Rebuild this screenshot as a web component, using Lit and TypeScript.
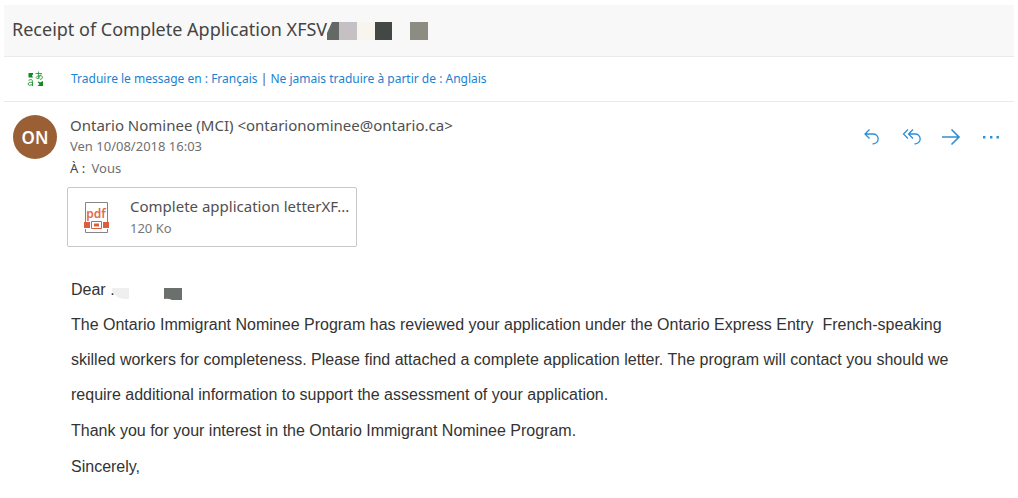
import { LitElement, html, css, svg } from "lit";
import { customElement, property } from "lit/decorators.js";

const redactedSubject = svg`
  <path d="M5 0H12V18H0V11Z" fill="#656965" />
  <path d="M12 0H30V18H12Z" fill="#c4c0c4" />
  <path d="M30 0H48V18H30Z" fill="#f8f4ee" />
  <path d="M48 0H65V18H48Z" fill="#444844" />
  <path d="M83 0H101V18H83Z" fill="#8c8c82" />`;

const redactedName = svg`
  <path d="M0 0H17V11H12Q4 10 0 3Z" fill="#efefef" />
  <path d="M52 0H70V12H60Q56 10 52 11Z" fill="#6c706c" />`;

@customElement("mail-action")
class MailAction extends LitElement {
  @property() label = "";
  @property() kind = "reply";

  static styles = css`
    :host {
      display: block;
    }
    .action {
      display: block;
      width: 20px;
      height: 20px;
      padding: 0;
      border: 0;
      background: none;
      color: #2b8fd6;
      cursor: pointer;
    }
    .glyph {
      display: block;
      fill: none;
      stroke: currentColor;
      stroke-width: 1.3;
    }
    .dots {
      fill: currentColor;
      stroke: none;
    }
  `;

  private glyph() {
    switch (this.kind) {
      case "reply":
        return svg`<path d="M8.500 2.500L4 7L8.500 11.500M4 7H12A4.800 4.800 0 0 1 12.500 16.800H11.500" />`;
      case "reply-all":
        return svg`<path d="M7 2.500L2.500 7L7 11.500M12 2.500L7.500 7L12 11.500M7.500 7H14A4.800 4.800 0 0 1 14.500 16.800H13.500" />`;
      case "forward":
        return svg`<path d="M1 10H18M10.500 2.500L18 10L10.500 17.500" stroke-width="1.600" />`;
      default:
        return svg`<path class="dots" d="M2 9h2.400v2.400H2zM9 9h2.400v2.400H9zM15.500 9h2.400v2.400H15.500z" />`;
    }
  }

  render() {
    return html`<button class="action" type="button" aria-label=${this.label}>
      <svg class="glyph" width="20" height="20" viewBox="0 0 20 20" aria-hidden="true">${this.glyph()}</svg>
    </button>`;
  }
}

@customElement("app-root")
class AppRoot extends LitElement {
  static styles = css`
    :host {
      display: block;
      padding: 5px 4px 0;
      background: #fff;
      color: #505050;
      font-family: "Noto Sans", "Open Sans", sans-serif;
    }
    .subject {
      display: flex;
      align-items: center;
      height: 51px;
      padding: 0 8px;
      background: #f8f8f8;
      border-bottom: 1px solid #eaeaea;
    }
    .title {
      margin: 0;
      padding-bottom: 3px;
      color: #444;
      font-size: 18px;
      line-height: 24px;
      font-weight: 400;
      white-space: nowrap;
    }
    .mask {
      display: block;
      flex: none;
    }
    .translate {
      display: grid;
      grid-template-columns: 67px 1fr;
      align-items: center;
      height: 44px;
      border-bottom: 1px solid #eaeaea;
      font-size: 12px;
      line-height: 16px;
    }
    .translate-icon {
      display: block;
      margin-left: 23px;
    }
    .link {
      color: #1a82cf;
      text-decoration: none;
    }
    .header {
      display: grid;
      grid-template-columns: 44px 1fr auto;
      column-gap: 13px;
      padding: 13px 13px 0 9px;
    }
    .avatar {
      display: grid;
      place-items: center;
      width: 44px;
      height: 44px;
      border-radius: 50%;
      background: #9a5f35;
      color: #fff;
      font-size: 17px;
      font-weight: 600;
    }
    .sender {
      font-size: 15px;
      line-height: 20px;
    }
    .meta {
      font-size: 13px;
      line-height: 22px;
      color: #707070;
    }
    .to {
      color: #444;
      padding-right: 3px;
    }
    .actions {
      display: flex;
      gap: 20px;
      padding-top: 12px;
    }
    .content {
      padding: 8px 40px 0 63px;
    }
    .attachment {
      display: flex;
      align-items: center;
      gap: 20px;
      box-sizing: border-box;
      width: 290px;
      max-width: 100%;
      height: 60px;
      padding: 0 4px 0 15px;
      border: 1px solid #c8c8c8;
      border-radius: 2px;
      color: #505050;
      text-decoration: none;
    }
    .file {
      min-width: 0;
    }
    .name {
      display: block;
      overflow: hidden;
      text-overflow: ellipsis;
      white-space: nowrap;
      font-size: 15px;
      line-height: 22px;
    }
    .size {
      display: block;
      font-size: 13px;
      line-height: 22px;
      color: #777;
    }
    .body {
      padding: 25px 0 0 4px;
      color: #333;
      font-family: "Liberation Sans", Arial, sans-serif;
      font-size: 16px;
      line-height: 35px;
    }
    .line {
      margin: 0 0 1px;
      white-space: pre-wrap;
    }
    .greeting {
      display: flex;
      align-items: center;
      margin: 0;
    }
    .greeting .mask {
      margin: 9px 0 0 -3px;
    }
  `;

  render() {
    return html`
      <header class="subject">
        <h1 class="title">Receipt of Complete Application XFSV</h1>
        <svg class="mask" width="101" height="18" aria-hidden="true">${redactedSubject}</svg>
      </header>
      <div class="translate">
        <svg class="translate-icon" width="18" height="16" viewBox="0 0 18 16" fill="none" stroke="#2f9a3a" aria-hidden="true">
          <path d="M1.500 2H6V3.500L5 4.500L6 6.500H1.500ZM10.500 11L12 10.500L13 11.500L16 10V15H10.500L12.500 13Z" fill="#128a20" stroke="none" />
          <path d="M1.500 9.300Q5.500 7.500 5.500 10.500V15M5.500 11.300Q1 11 1 13.300Q1.300 15.300 5.500 13.500" />
          <path d="M8.500 2.500H15M11.500 .500Q11 5 12 8M14 3.500Q12 7.700 10 7.700Q8 6.500 10.500 5Q14.500 3.500 15.500 5.700Q15.800 8 13 8.500" stroke-width=".9" />
        </svg>
        <div>
          <a class="link" href="#fr">Traduire le message en : Français</a> | <a class="link" href="#never">Ne jamais traduire à partir de : Anglais</a>
        </div>
      </div>
      <section class="header">
        <div class="avatar">ON</div>
        <div>
          <div class="sender">Ontario Nominee (MCI) &lt;ontarionominee@ontario.ca&gt;</div>
          <div class="meta">Ven 10/08/2018 16:03</div>
          <div class="meta"><span class="to">À :</span> Vous</div>
        </div>
        <div class="actions">
          <mail-action kind="reply" label="Répondre"></mail-action>
          <mail-action kind="reply-all" label="Répondre à tous"></mail-action>
          <mail-action kind="forward" label="Transférer"></mail-action>
          <mail-action kind="more" label="Plus"></mail-action>
        </div>
      </section>
      <main class="content">
        <a class="attachment" href="#attachment">
          <svg width="27" height="34" viewBox="0 0 27 34" fill="none" aria-hidden="true">
            <path d="M2.500 22V2.500H24.500V22M2.500 29V32.500H24.500V29" stroke="#858585" />
            <text x="13" y="18" text-anchor="middle" font-size="12" font-weight="600" fill="#e0694c">pdf</text>
            <path d="M1 22H7V28H1ZM20 22H26V28H20Z" fill="#d9603f" />
            <path d="M8.500 21.500H18.500V28.500H8.500Z" stroke="#d9603f" />
            <path d="M11 23.500H16V26.500H11Z" fill="#d9603f" />
          </svg>
          <span class="file">
            <span class="name">Complete application letterXF...</span>
            <span class="size">120 Ko</span>
          </span>
        </a>
        <div class="body">
          <p class="greeting">Dear .<svg class="mask" width="70" height="12" aria-hidden="true">${redactedName}</svg></p>
          <p class="line">The Ontario Immigrant Nominee Program has reviewed your application under the Ontario Express Entry  French-speaking skilled workers for completeness. Please find attached a complete application letter. The program will contact you should we require additional information to support the assessment of your application.</p>
          <p class="line">Thank you for your interest in the Ontario Immigrant Nominee Program.</p>
          <p class="line">Sincerely,</p>
        </div>
      </main>
    `;
  }
}
